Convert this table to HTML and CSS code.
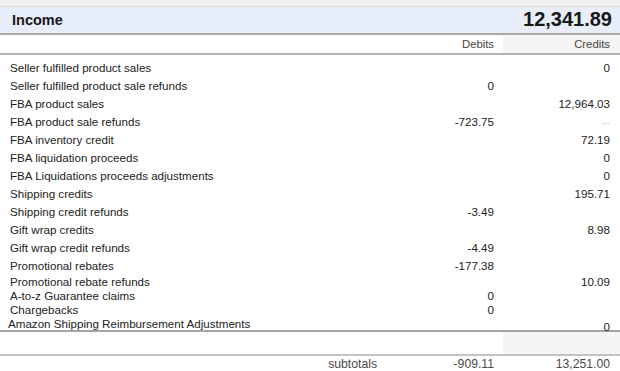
FILE: index.html
```html
<!DOCTYPE html>
<html>
<head>
<meta charset="utf-8">
<link rel="stylesheet" href="styles.css">
</head>
<body>
<div class="report">
  <div class="topband"></div>
  <div class="title">
    <span class="title-label">Income</span>
    <span class="title-total">12,341.89</span>
  </div>
  <div class="grid colhead">
    <span></span>
    <span class="num">Debits</span>
    <span class="num credit shade">Credits</span>
  </div>
  <div class="rows">
    <div class="grid row"><span class="label">Seller fulfilled product sales</span><span class="num"></span><span class="num credit">0</span></div>
    <div class="grid row"><span class="label">Seller fulfilled product sale refunds</span><span class="num">0</span><span class="num credit"></span></div>
    <div class="grid row"><span class="label">FBA product sales</span><span class="num"></span><span class="num credit">12,964.03</span></div>
    <div class="grid row"><span class="label">FBA product sale refunds</span><span class="num">-723.75</span><span class="num credit faint">...</span></div>
    <div class="grid row"><span class="label">FBA inventory credit</span><span class="num"></span><span class="num credit">72.19</span></div>
    <div class="grid row"><span class="label">FBA liquidation proceeds</span><span class="num"></span><span class="num credit">0</span></div>
    <div class="grid row"><span class="label">FBA Liquidations proceeds adjustments</span><span class="num"></span><span class="num credit">0</span></div>
    <div class="grid row"><span class="label">Shipping credits</span><span class="num"></span><span class="num credit">195.71</span></div>
    <div class="grid row"><span class="label">Shipping credit refunds</span><span class="num">-3.49</span><span class="num credit"></span></div>
    <div class="grid row"><span class="label">Gift wrap credits</span><span class="num"></span><span class="num credit">8.98</span></div>
    <div class="grid row"><span class="label">Gift wrap credit refunds</span><span class="num">-4.49</span><span class="num credit"></span></div>
    <div class="grid row"><span class="label">Promotional rebates</span><span class="num">-177.38</span><span class="num credit"></span></div>
    <div class="grid row tight"><span class="label">Promotional rebate refunds</span><span class="num"></span><span class="num credit">10.09</span></div>
    <div class="grid row tight"><span class="label">A-to-z Guarantee claims</span><span class="num">0</span><span class="num credit"></span></div>
    <div class="grid row tight"><span class="label">Chargebacks</span><span class="num">0</span><span class="num credit"></span></div>
    <div class="grid row tight"><span class="label flush">Amazon Shipping Reimbursement Adjustments</span><span class="num"></span><span class="num credit low">0</span></div>
  </div>
  <div class="grid spacer">
    <span></span><span></span><span class="shade"></span>
  </div>
  <div class="grid subtotals">
    <span class="sub-label">subtotals</span>
    <span class="num">-909.11</span>
    <span class="num credit">13,251.00</span>
  </div>
</div>
</body>
</html>
```

FILE: styles.css
```css
html, body {
  margin: 0;
  padding: 0;
  background: #ffffff;
}

body {
  font-family: "Liberation Sans", Arial, sans-serif;
  color: #222222;
}

.report {
  width: 620px;
  display: flex;
  flex-direction: column;
}

.topband {
  height: 6px;
  background: #f1f1f1;
  border-bottom: 1px solid #dcdcdc;
}

.title {
  height: 26px;
  background: #e7eef9;
  border-bottom: 2px solid #a9a9a9;
  display: flex;
  align-items: center;
  justify-content: space-between;
  padding: 0 8px 0 12px;
}

.title-label {
  font-weight: bold;
  font-size: 14.5px;
  color: #181818;
}

.title-total {
  font-weight: bold;
  font-size: 20px;
  color: #181818;
  position: relative;
  top: -1px;
}

.grid {
  display: grid;
  grid-template-columns: 1fr 110px 117px;
  align-items: center;
}

.colhead {
  height: 18px;
  border-bottom: 2px solid #b3b3b3;
  font-size: 11.3px;
  color: #444444;
}

.colhead > span {
  height: 100%;
  display: flex;
  align-items: center;
  justify-content: flex-end;
}

.shade {
  background: #f5f5f5;
}

.num {
  text-align: right;
  padding-right: 9px;
}

.credit {
  padding-right: 10px;
}

.rows {
  padding-top: 3px;
  display: flex;
  flex-direction: column;
  font-size: 11.6px;
  color: #222222;
}

.row {
  height: 18px;
}

.row.tight {
  height: 14px;
}

.label {
  padding-left: 10px;
  white-space: nowrap;
}

.label.flush {
  padding-left: 8px;
}

.faint {
  color: #aaaaaa;
  font-size: 9px;
}

.low {
  position: relative;
  top: 3px;
}

.spacer {
  height: 22px;
  border-top: 2px solid #a3a3a3;
  border-bottom: 2px solid #c2c2c2;
}

.spacer > span {
  height: 100%;
}

.subtotals {
  height: 15px;
  font-size: 12.2px;
  color: #4a4a4a;
}

.sub-label {
  text-align: right;
  padding-right: 16px;
}
```
